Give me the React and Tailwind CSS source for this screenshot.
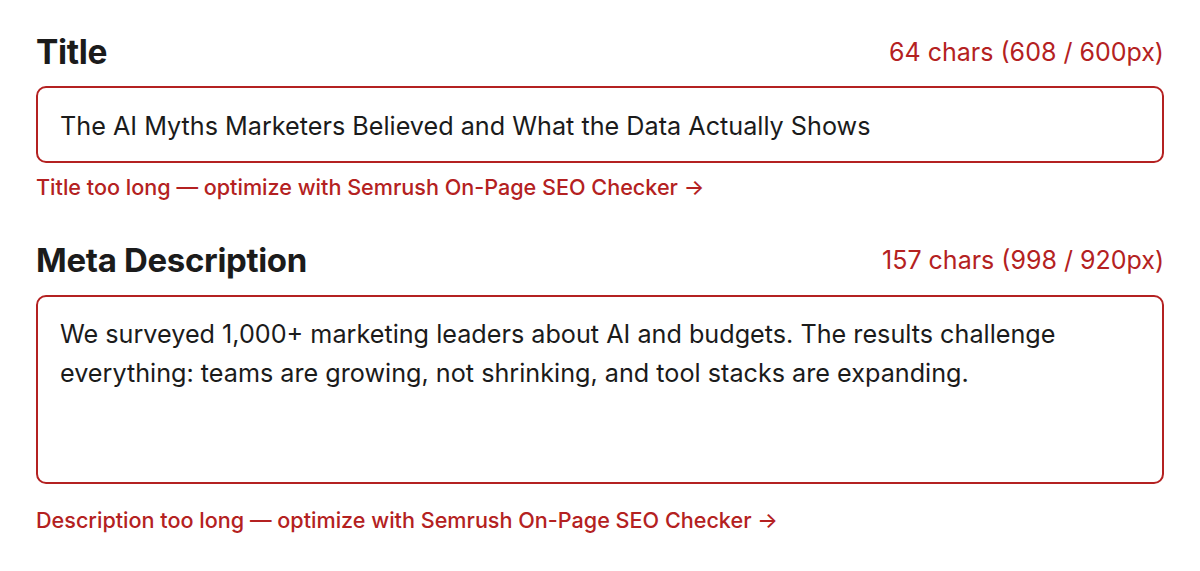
export default function App() {
  return (
    <div className="min-h-screen bg-white px-9 pt-[32px] font-['Inter',sans-serif] text-[#1b1b1b]">
      <section>
        <div className="flex items-center justify-between">
          <h2 className="text-[33.5px] font-bold leading-10 tracking-[-0.01em]">Title</h2>
          <span className="text-[25px] leading-10 text-[#b42121]">64 chars (608 / 600px)</span>
        </div>
        <div className="mt-[14px] flex h-[77px] items-center rounded-[10px] border-2 border-[#b42121] px-[22px] pt-[2px] text-[25.2px] leading-9">
          The AI Myths Marketers Believed and What the Data Actually Shows
        </div>
        <p className="mt-[10px] text-[21.6px] font-medium leading-7 text-[#b42121]">
          Title too long — optimize with Semrush On-Page SEO Checker →
        </p>
      </section>

      <section className="mt-[39px]">
        <div className="flex items-center justify-between">
          <h2 className="text-[33px] font-bold leading-10 tracking-[-0.01em]">Meta Description</h2>
          <span className="text-[25px] leading-10 text-[#b42121]">157 chars (998 / 920px)</span>
        </div>
        <div className="mt-[15px] h-[189px] rounded-[10px] border-2 border-[#b42121] px-[22px] pt-[18px] text-[25.2px] leading-[39px]">
          We surveyed 1,000+ marketing leaders about AI and budgets. The results challenge everything: teams are growing, not shrinking, and tool stacks are expanding.
        </div>
        <p className="mt-[22px] text-[21.6px] font-medium leading-7 text-[#b42121]">
          Description too long — optimize with Semrush On-Page SEO Checker →
        </p>
      </section>
    </div>
  )
}
